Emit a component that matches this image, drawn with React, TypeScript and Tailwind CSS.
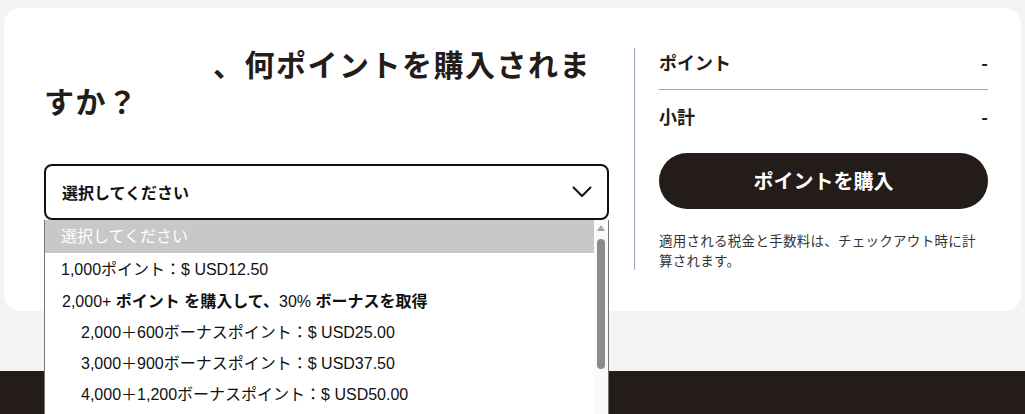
import React from 'react';

const jp = '[font-family:"Noto_Sans_CJK_JP",sans-serif]';
const opt = '[font-family:"Liberation_Sans","Noto_Sans_CJK_JP",sans-serif]';

const SUB_OPTIONS = [
  '2,000＋600ボーナスポイント：$ USD25.00',
  '3,000＋900ボーナスポイント：$ USD37.50',
  '4,000＋1,200ボーナスポイント：$ USD50.00',
];

function Chevron() {
  return (
    <svg width="20" height="12" viewBox="0 0 20 12" fill="none">
      <path d="M1.5 1.5l8.5 8.5 8.5-8.5" stroke="#111" strokeWidth="2" strokeLinecap="round" strokeLinejoin="round" />
    </svg>
  );
}

function OptionList() {
  return (
    <div className={`absolute left-0 top-full w-full h-[200px] bg-white border border-[#767676] border-t-0 flex ${opt}`}>
      <div className="flex-1 text-[16px] text-[#111]">
        <div className="h-[33px] flex items-center pl-4 bg-[#c8c8c8] text-white">選択してください</div>
        <div className="h-[33px] flex items-center pl-4">1,000ポイント：$ USD12.50</div>
        <div className="h-[31px] flex items-center pl-[17px]">
          <span>2,000+&nbsp;</span>
          <span className="font-bold">ポイント を購入して、</span>
          <span>30%&nbsp;</span>
          <span className="font-bold">ボーナスを取得</span>
        </div>
        {SUB_OPTIONS.map((o) => (
          <div key={o} className="h-[31.3px] flex items-center pl-9">
            {o}
          </div>
        ))}
      </div>
      <div className="w-[14px] bg-[#fafafa] flex flex-col items-center pt-[5px]">
        <div className="w-0 h-0 border-l-[4px] border-r-[4px] border-b-[6px] border-l-transparent border-r-transparent border-b-[#a3a3a3]" />
        <div className="mt-[8px] w-[8px] h-[130px] rounded-full bg-[#8c8c8c]" />
      </div>
    </div>
  );
}

export default function App() {
  return (
    <div className={`min-h-screen bg-[#f3f3f3] text-[#231c19] ${jp}`}>
      <div className="pt-2 pl-1">
        <div className="bg-white rounded-l-2xl rounded-r-2xl w-[1017px] h-[303px] pl-10 pr-[33px] pt-10 flex">
          <div className="w-[565px]">
            <h1 className="-mt-[3px] text-[30px] leading-[37px] font-bold tracking-[0.05em] [text-spacing-trim:space-all]">
              <span className="inline-block w-[169px]" />
              、何ポイントを購入されますか？
            </h1>
            <div className="relative mt-[45px]">
              <div className="h-[56px] border-2 border-[#111] rounded-lg flex items-center justify-between pl-4 pr-[15px]">
                <span className="text-[16px] font-bold text-[#111]">選択してください</span>
                <Chevron />
              </div>
              <OptionList />
            </div>
          </div>
          <div className="ml-[25px] w-[354px] h-[222px] border-l border-[#94a3b8] pl-6">
            <div className="-mt-[1px] flex justify-between items-center h-[30px] text-[18px] font-bold">
              <span>ポイント</span>
              <span>-</span>
            </div>
            <div className="mt-3 border-t border-[#94a3b8]" />
            <div className="mt-[11px] flex justify-between items-center h-[30px] text-[18px] font-bold">
              <span>小計</span>
              <span>-</span>
            </div>
            <button className="mt-[22px] w-full h-[56px] rounded-full bg-[#231c19] text-white text-[20px] font-bold">
              ポイントを購入
            </button>
            <p className="mt-[21px] text-[13.5px] leading-[20px] tracking-[0.02em] text-[#333]">
              適用される税金と手数料は、チェックアウト時に計算されます。
            </p>
          </div>
        </div>
      </div>
      <div className="mt-[60px] h-[100px] bg-[#231c19]" />
    </div>
  );
}
